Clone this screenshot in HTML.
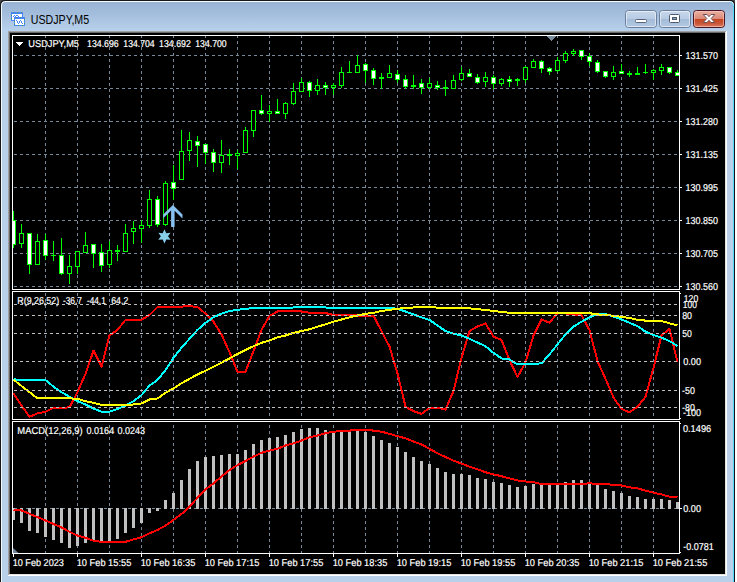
<!DOCTYPE html>
<html><head><meta charset="utf-8"><title>USDJPY,M5</title>
<style>html,body{margin:0;padding:0;background:#ffffff;overflow:hidden}body{width:737px;height:582px;position:relative;font-family:"Liberation Sans",sans-serif}</style>
</head><body>
<svg width="737" height="582" viewBox="0 0 737 582" style="display:block;position:absolute;left:0;top:0">
<defs>
<linearGradient id="gt" x1="0" y1="0" x2="0" y2="1">
<stop offset="0" stop-color="#99b3d4"/><stop offset="0.4" stop-color="#a3bddc"/><stop offset="1" stop-color="#b9d3ee"/>
</linearGradient>
<linearGradient id="gside" x1="0" y1="0" x2="0" y2="1">
<stop offset="0" stop-color="#b9d0ea"/><stop offset="1" stop-color="#bcd2ea"/>
</linearGradient>
<linearGradient id="gbtn" x1="0" y1="0" x2="0" y2="1">
<stop offset="0" stop-color="#c9d9ec"/><stop offset="0.48" stop-color="#b7cbe3"/><stop offset="0.5" stop-color="#a3bbd8"/><stop offset="1" stop-color="#b4cae3"/>
</linearGradient>
<linearGradient id="gclose" x1="0" y1="0" x2="0" y2="1">
<stop offset="0" stop-color="#eab2a4"/><stop offset="0.48" stop-color="#dc8a78"/><stop offset="0.5" stop-color="#c6431f"/><stop offset="0.8" stop-color="#cc5a3c"/><stop offset="1" stop-color="#dc8a72"/>
</linearGradient>
<clipPath id="cm"><rect x="13" y="36" width="666" height="253"/></clipPath>
<clipPath id="c1"><rect x="13" y="292" width="666" height="127"/></clipPath>
<clipPath id="c2"><rect x="13" y="422" width="666" height="131"/></clipPath>
</defs>
<rect x="0" y="0" width="737" height="582" fill="#ffffff"/>
<rect x="0" y="0" width="735" height="8" fill="#4a4a4a"/>
<path d="M0 582 V5 Q0 0 5 0 H730 Q735 0 735 5 V582 Z" fill="#14181c"/>
<path d="M1 582 V5.5 Q1 1 5.5 1 H729.5 Q734 1 734 5.5 V582 Z" fill="#f6fafd"/>
<path d="M2 582 V6 Q2 2 6 2 H729 Q733 2 733 6 V582 Z" fill="#b9d0ea"/>
<path d="M2 32 V6 Q2 2 6 2 H729 Q733 2 733 6 V32 Z" fill="url(#gt)"/>
<path d="M730.5 2 L733.5 5 V582" fill="none" stroke="#52d8ff" stroke-width="1"/>
<rect x="734" y="5" width="1" height="577" fill="#101418"/>
<rect x="8" y="31" width="719" height="545" fill="#a0a0a0"/>
<rect x="9" y="32" width="718" height="544" fill="#696969"/>
<rect x="10" y="33" width="717" height="543" fill="#000000"/>
<rect x="725" y="32" width="1" height="543" fill="#e3e3e3"/>
<rect x="726" y="31" width="1" height="545" fill="#ffffff"/>
<rect x="9" y="574" width="717" height="1" fill="#e3e3e3"/>
<rect x="8" y="575" width="719" height="1" fill="#ffffff"/>
<rect x="10" y="33" width="715" height="541" fill="#000000"/>
<g shape-rendering="crispEdges">
<rect x="11" y="12" width="12" height="9" fill="#4a86f7"/>
<rect x="12" y="14" width="10" height="6" fill="#ffffff"/>
<rect x="13" y="16" width="1" height="1" fill="#4a86f7"/>
<rect x="14" y="15" width="1" height="1" fill="#4a86f7"/>
<rect x="15" y="16" width="1" height="1" fill="#4a86f7"/>
<rect x="16" y="15" width="1" height="1" fill="#4a86f7"/>
<rect x="17" y="15" width="1" height="1" fill="#4a86f7"/>
<rect x="18" y="16" width="1" height="1" fill="#4a86f7"/>
<rect x="19" y="17" width="1" height="1" fill="#4a86f7"/>
<rect x="14" y="17" width="11" height="9" fill="#4a86f7"/>
<rect x="15" y="19" width="9" height="6" fill="#ffffff"/>
<rect x="16" y="20" width="1" height="1" fill="#4a86f7"/>
<rect x="17" y="21" width="1" height="1" fill="#4a86f7"/>
<rect x="17" y="22" width="1" height="1" fill="#4a86f7"/>
<rect x="18" y="23" width="1" height="1" fill="#4a86f7"/>
<rect x="19" y="22" width="1" height="1" fill="#4a86f7"/>
<rect x="19" y="21" width="1" height="1" fill="#4a86f7"/>
<rect x="20" y="20" width="1" height="1" fill="#4a86f7"/>
<rect x="21" y="21" width="1" height="1" fill="#4a86f7"/>
<rect x="21" y="22" width="1" height="1" fill="#4a86f7"/>
<rect x="22" y="23" width="1" height="1" fill="#4a86f7"/>
<rect x="13" y="12" width="1" height="1" fill="#3fa06a"/>
<rect x="17" y="12" width="1" height="1" fill="#3fa06a"/>
<rect x="21" y="12" width="1" height="1" fill="#3fa06a"/>
<rect x="16" y="17" width="1" height="1" fill="#3fa06a"/>
<rect x="20" y="17" width="1" height="1" fill="#3fa06a"/>
<rect x="24" y="19" width="1" height="1" fill="#3fa06a"/>
<rect x="14" y="21" width="1" height="1" fill="#3fa06a"/>
<rect x="14" y="24" width="1" height="1" fill="#3fa06a"/>
<rect x="18" y="25" width="1" height="1" fill="#3fa06a"/>
<rect x="22" y="25" width="1" height="1" fill="#3fa06a"/>
<rect x="24" y="23" width="1" height="1" fill="#3fa06a"/>
<rect x="11" y="15" width="1" height="1" fill="#3fa06a"/>
<rect x="11" y="18" width="1" height="1" fill="#3fa06a"/>
</g>
<g font-family="'Liberation Sans', sans-serif">
<text x="30.7" y="24" font-size="12" fill="#000000" stroke="#000000" stroke-width="0" textLength="58.5" lengthAdjust="spacingAndGlyphs">USDJPY,M5</text>
</g>
<rect x="625.5" y="10.5" width="31" height="17" rx="3" ry="3" fill="url(#gbtn)" stroke="#6b7f9c" stroke-width="1"/>
<rect x="626.5" y="11.5" width="29" height="15" rx="2" ry="2" fill="none" stroke="#ffffff" stroke-width="1" stroke-opacity="0.55"/>
<rect x="659.5" y="10.5" width="31" height="17" rx="3" ry="3" fill="url(#gbtn)" stroke="#6b7f9c" stroke-width="1"/>
<rect x="660.5" y="11.5" width="29" height="15" rx="2" ry="2" fill="none" stroke="#ffffff" stroke-width="1" stroke-opacity="0.55"/>
<rect x="693.5" y="10.5" width="31" height="17" rx="3" ry="3" fill="url(#gclose)" stroke="#4a1626" stroke-width="1"/>
<rect x="694.5" y="11.5" width="29" height="15" rx="2" ry="2" fill="none" stroke="#ffd0c4" stroke-width="1" stroke-opacity="0.55"/>
<rect x="635.5" y="19.5" width="11" height="3" rx="1" fill="#ffffff" stroke="#56637a" stroke-width="1"/>
<rect x="669.5" y="14.5" width="10" height="8" rx="1" fill="#ffffff" stroke="#4d5a6c" stroke-width="1"/>
<rect x="672.5" y="17.5" width="4" height="2" fill="#8aa0bc" stroke="#4d5a6c" stroke-width="1"/>
<path d="M703.2 14.5 H707 L709 16.7 L711 14.5 H714.8 L711.2 18.5 L714.8 22.5 H711 L709 20.3 L707 22.5 H703.2 L706.8 18.5 Z" fill="#ffffff" stroke="#6a5058" stroke-width="1" stroke-linejoin="round"/>
<g shape-rendering="crispEdges">
<rect x="12" y="35" width="668" height="1" fill="#ffffff"/>
<rect x="12" y="35" width="1" height="519" fill="#ffffff"/>
<rect x="679" y="35" width="1" height="519" fill="#ffffff"/>
<rect x="12" y="289" width="668" height="1" fill="#ffffff"/>
<rect x="12" y="290" width="668" height="1" fill="#000000"/>
<rect x="12" y="291" width="668" height="1" fill="#ffffff"/>
<rect x="12" y="419" width="668" height="1" fill="#ffffff"/>
<rect x="12" y="420" width="668" height="1" fill="#000000"/>
<rect x="12" y="421" width="668" height="1" fill="#ffffff"/>
<rect x="12" y="553" width="668" height="1" fill="#ffffff"/>
<line x1="14" y1="55.5" x2="679" y2="55.5" stroke="#778899" stroke-width="1" stroke-dasharray="3 3"/>
<rect x="680" y="55" width="2" height="1" fill="#ffffff"/>
<line x1="14" y1="88.5" x2="679" y2="88.5" stroke="#778899" stroke-width="1" stroke-dasharray="3 3"/>
<rect x="680" y="88" width="2" height="1" fill="#ffffff"/>
<line x1="14" y1="121.5" x2="679" y2="121.5" stroke="#778899" stroke-width="1" stroke-dasharray="3 3"/>
<rect x="680" y="121" width="2" height="1" fill="#ffffff"/>
<line x1="14" y1="154.5" x2="679" y2="154.5" stroke="#778899" stroke-width="1" stroke-dasharray="3 3"/>
<rect x="680" y="154" width="2" height="1" fill="#ffffff"/>
<line x1="14" y1="187.5" x2="679" y2="187.5" stroke="#778899" stroke-width="1" stroke-dasharray="3 3"/>
<rect x="680" y="187" width="2" height="1" fill="#ffffff"/>
<line x1="14" y1="220.5" x2="679" y2="220.5" stroke="#778899" stroke-width="1" stroke-dasharray="3 3"/>
<rect x="680" y="220" width="2" height="1" fill="#ffffff"/>
<line x1="14" y1="253.5" x2="679" y2="253.5" stroke="#778899" stroke-width="1" stroke-dasharray="3 3"/>
<rect x="680" y="253" width="2" height="1" fill="#ffffff"/>
<line x1="14" y1="286.5" x2="679" y2="286.5" stroke="#778899" stroke-width="1" stroke-dasharray="3 3"/>
<rect x="680" y="286" width="2" height="1" fill="#ffffff"/>
<line x1="45.5" y1="35" x2="45.5" y2="553" stroke="#778899" stroke-width="1" stroke-dasharray="3 3"/>
<line x1="77.5" y1="35" x2="77.5" y2="553" stroke="#778899" stroke-width="1" stroke-dasharray="3 3"/>
<line x1="109.5" y1="35" x2="109.5" y2="553" stroke="#778899" stroke-width="1" stroke-dasharray="3 3"/>
<line x1="141.5" y1="35" x2="141.5" y2="553" stroke="#778899" stroke-width="1" stroke-dasharray="3 3"/>
<line x1="173.5" y1="35" x2="173.5" y2="553" stroke="#778899" stroke-width="1" stroke-dasharray="3 3"/>
<line x1="205.5" y1="35" x2="205.5" y2="553" stroke="#778899" stroke-width="1" stroke-dasharray="3 3"/>
<line x1="237.5" y1="35" x2="237.5" y2="553" stroke="#778899" stroke-width="1" stroke-dasharray="3 3"/>
<line x1="269.5" y1="35" x2="269.5" y2="553" stroke="#778899" stroke-width="1" stroke-dasharray="3 3"/>
<line x1="301.5" y1="35" x2="301.5" y2="553" stroke="#778899" stroke-width="1" stroke-dasharray="3 3"/>
<line x1="333.5" y1="35" x2="333.5" y2="553" stroke="#778899" stroke-width="1" stroke-dasharray="3 3"/>
<line x1="365.5" y1="35" x2="365.5" y2="553" stroke="#778899" stroke-width="1" stroke-dasharray="3 3"/>
<line x1="397.5" y1="35" x2="397.5" y2="553" stroke="#778899" stroke-width="1" stroke-dasharray="3 3"/>
<line x1="429.5" y1="35" x2="429.5" y2="553" stroke="#778899" stroke-width="1" stroke-dasharray="3 3"/>
<line x1="461.5" y1="35" x2="461.5" y2="553" stroke="#778899" stroke-width="1" stroke-dasharray="3 3"/>
<line x1="493.5" y1="35" x2="493.5" y2="553" stroke="#778899" stroke-width="1" stroke-dasharray="3 3"/>
<line x1="525.5" y1="35" x2="525.5" y2="553" stroke="#778899" stroke-width="1" stroke-dasharray="3 3"/>
<line x1="557.5" y1="35" x2="557.5" y2="553" stroke="#778899" stroke-width="1" stroke-dasharray="3 3"/>
<line x1="589.5" y1="35" x2="589.5" y2="553" stroke="#778899" stroke-width="1" stroke-dasharray="3 3"/>
<line x1="621.5" y1="35" x2="621.5" y2="553" stroke="#778899" stroke-width="1" stroke-dasharray="3 3"/>
<line x1="653.5" y1="35" x2="653.5" y2="553" stroke="#778899" stroke-width="1" stroke-dasharray="3 3"/>
<rect x="12" y="35" width="668" height="1" fill="#ffffff"/>
<rect x="12" y="553" width="668" height="1" fill="#ffffff"/>
<rect x="12" y="289" width="668" height="1" fill="#ffffff"/>
<rect x="13" y="290" width="666" height="1" fill="#000000"/>
<rect x="12" y="291" width="668" height="1" fill="#ffffff"/>
<rect x="12" y="419" width="668" height="1" fill="#ffffff"/>
<rect x="13" y="420" width="666" height="1" fill="#000000"/>
<rect x="12" y="421" width="668" height="1" fill="#ffffff"/>
<line x1="14" y1="508.5" x2="679" y2="508.5" stroke="#778899" stroke-width="1" stroke-dasharray="3 3"/>
<rect x="680" y="293" width="1" height="1" fill="#ffffff"/>
<rect x="680" y="418" width="1" height="1" fill="#ffffff"/>
<rect x="680" y="423" width="1" height="1" fill="#ffffff"/>
<rect x="680" y="508" width="2" height="1" fill="#ffffff"/>
<rect x="680" y="552" width="1" height="1" fill="#ffffff"/>
<rect x="13" y="554" width="1" height="3" fill="#ffffff"/>
<rect x="77" y="554" width="1" height="3" fill="#ffffff"/>
<rect x="141" y="554" width="1" height="3" fill="#ffffff"/>
<rect x="205" y="554" width="1" height="3" fill="#ffffff"/>
<rect x="269" y="554" width="1" height="3" fill="#ffffff"/>
<rect x="333" y="554" width="1" height="3" fill="#ffffff"/>
<rect x="397" y="554" width="1" height="3" fill="#ffffff"/>
<rect x="461" y="554" width="1" height="3" fill="#ffffff"/>
<rect x="525" y="554" width="1" height="3" fill="#ffffff"/>
<rect x="589" y="554" width="1" height="3" fill="#ffffff"/>
<rect x="653" y="554" width="1" height="3" fill="#ffffff"/>
</g>
<g shape-rendering="crispEdges">
<rect x="547" y="36" width="9" height="1" fill="#7b8c9e"/>
<rect x="548" y="37" width="7" height="1" fill="#7b8c9e"/>
<rect x="549" y="38" width="5" height="1" fill="#7b8c9e"/>
<rect x="550" y="39" width="3" height="1" fill="#7b8c9e"/>
<rect x="551" y="40" width="1" height="1" fill="#7b8c9e"/>
</g>
<path d="M13 548 V553 H18.5 Z" fill="#6f86a0"/>
<g shape-rendering="crispEdges">
<rect x="16" y="42" width="7" height="1" fill="#ffffff"/>
<rect x="17" y="43" width="5" height="1" fill="#ffffff"/>
<rect x="18" y="44" width="3" height="1" fill="#ffffff"/>
<rect x="19" y="45" width="1" height="1" fill="#ffffff"/>
</g>
<g shape-rendering="crispEdges" clip-path="url(#cm)">
<rect x="13" y="211" width="1" height="37" fill="#00ff00"/>
<rect x="11" y="220" width="5" height="25" fill="#00ff00"/>
<rect x="12" y="221" width="3" height="23" fill="#ffffff"/>
<rect x="21" y="224" width="1" height="24" fill="#00ff00"/>
<rect x="19" y="233" width="5" height="11" fill="#00ff00"/>
<rect x="20" y="234" width="3" height="9" fill="#000000"/>
<rect x="29" y="233" width="1" height="41" fill="#00ff00"/>
<rect x="27" y="233" width="5" height="32" fill="#00ff00"/>
<rect x="28" y="234" width="3" height="30" fill="#ffffff"/>
<rect x="37" y="234" width="1" height="31" fill="#00ff00"/>
<rect x="35" y="241" width="5" height="24" fill="#00ff00"/>
<rect x="36" y="242" width="3" height="22" fill="#000000"/>
<rect x="45" y="234" width="1" height="26" fill="#00ff00"/>
<rect x="43" y="240" width="5" height="16" fill="#00ff00"/>
<rect x="44" y="241" width="3" height="14" fill="#ffffff"/>
<rect x="53" y="241" width="1" height="20" fill="#00ff00"/>
<rect x="51" y="255" width="5" height="1" fill="#00ff00"/>
<rect x="61" y="238" width="1" height="37" fill="#00ff00"/>
<rect x="59" y="255" width="5" height="19" fill="#00ff00"/>
<rect x="60" y="256" width="3" height="17" fill="#ffffff"/>
<rect x="69" y="255" width="1" height="29" fill="#00ff00"/>
<rect x="67" y="266" width="5" height="8" fill="#00ff00"/>
<rect x="68" y="267" width="3" height="6" fill="#000000"/>
<rect x="77" y="251" width="1" height="23" fill="#00ff00"/>
<rect x="75" y="251" width="5" height="16" fill="#00ff00"/>
<rect x="76" y="252" width="3" height="14" fill="#000000"/>
<rect x="85" y="232" width="1" height="21" fill="#00ff00"/>
<rect x="83" y="245" width="5" height="8" fill="#00ff00"/>
<rect x="84" y="246" width="3" height="6" fill="#000000"/>
<rect x="93" y="244" width="1" height="24" fill="#00ff00"/>
<rect x="91" y="244" width="5" height="10" fill="#00ff00"/>
<rect x="92" y="245" width="3" height="8" fill="#ffffff"/>
<rect x="101" y="244" width="1" height="28" fill="#00ff00"/>
<rect x="99" y="252" width="5" height="14" fill="#00ff00"/>
<rect x="100" y="253" width="3" height="12" fill="#ffffff"/>
<rect x="109" y="241" width="1" height="27" fill="#00ff00"/>
<rect x="107" y="250" width="5" height="15" fill="#00ff00"/>
<rect x="108" y="251" width="3" height="13" fill="#000000"/>
<rect x="117" y="245" width="1" height="16" fill="#00ff00"/>
<rect x="115" y="250" width="5" height="2" fill="#00ff00"/>
<rect x="125" y="224" width="1" height="28" fill="#00ff00"/>
<rect x="123" y="233" width="5" height="19" fill="#00ff00"/>
<rect x="124" y="234" width="3" height="17" fill="#000000"/>
<rect x="133" y="221" width="1" height="23" fill="#00ff00"/>
<rect x="131" y="228" width="5" height="4" fill="#00ff00"/>
<rect x="132" y="229" width="3" height="2" fill="#000000"/>
<rect x="141" y="220" width="1" height="23" fill="#00ff00"/>
<rect x="139" y="225" width="5" height="4" fill="#00ff00"/>
<rect x="140" y="226" width="3" height="2" fill="#000000"/>
<rect x="149" y="190" width="1" height="38" fill="#00ff00"/>
<rect x="147" y="199" width="5" height="27" fill="#00ff00"/>
<rect x="148" y="200" width="3" height="25" fill="#000000"/>
<rect x="157" y="196" width="1" height="31" fill="#00ff00"/>
<rect x="155" y="199" width="5" height="26" fill="#00ff00"/>
<rect x="156" y="200" width="3" height="24" fill="#ffffff"/>
<rect x="165" y="181" width="1" height="45" fill="#00ff00"/>
<rect x="163" y="183" width="5" height="42" fill="#00ff00"/>
<rect x="164" y="184" width="3" height="40" fill="#000000"/>
<rect x="173" y="165" width="1" height="35" fill="#00ff00"/>
<rect x="171" y="182" width="5" height="7" fill="#00ff00"/>
<rect x="172" y="183" width="3" height="5" fill="#ffffff"/>
<rect x="181" y="130" width="1" height="50" fill="#00ff00"/>
<rect x="179" y="151" width="5" height="29" fill="#00ff00"/>
<rect x="180" y="152" width="3" height="27" fill="#000000"/>
<rect x="189" y="132" width="1" height="29" fill="#00ff00"/>
<rect x="187" y="140" width="5" height="11" fill="#00ff00"/>
<rect x="188" y="141" width="3" height="9" fill="#000000"/>
<rect x="197" y="136" width="1" height="31" fill="#00ff00"/>
<rect x="195" y="141" width="5" height="5" fill="#00ff00"/>
<rect x="196" y="142" width="3" height="3" fill="#ffffff"/>
<rect x="205" y="144" width="1" height="20" fill="#00ff00"/>
<rect x="203" y="144" width="5" height="9" fill="#00ff00"/>
<rect x="204" y="145" width="3" height="7" fill="#ffffff"/>
<rect x="213" y="149" width="1" height="23" fill="#00ff00"/>
<rect x="211" y="152" width="5" height="11" fill="#00ff00"/>
<rect x="212" y="153" width="3" height="9" fill="#ffffff"/>
<rect x="221" y="140" width="1" height="33" fill="#00ff00"/>
<rect x="219" y="155" width="5" height="8" fill="#00ff00"/>
<rect x="220" y="156" width="3" height="6" fill="#000000"/>
<rect x="229" y="149" width="1" height="16" fill="#00ff00"/>
<rect x="227" y="154" width="5" height="2" fill="#00ff00"/>
<rect x="237" y="150" width="1" height="19" fill="#00ff00"/>
<rect x="235" y="153" width="5" height="3" fill="#00ff00"/>
<rect x="236" y="154" width="3" height="1" fill="#000000"/>
<rect x="245" y="127" width="1" height="26" fill="#00ff00"/>
<rect x="243" y="130" width="5" height="23" fill="#00ff00"/>
<rect x="244" y="131" width="3" height="21" fill="#000000"/>
<rect x="253" y="110" width="1" height="27" fill="#00ff00"/>
<rect x="251" y="110" width="5" height="21" fill="#00ff00"/>
<rect x="252" y="111" width="3" height="19" fill="#000000"/>
<rect x="261" y="95" width="1" height="20" fill="#00ff00"/>
<rect x="259" y="110" width="5" height="4" fill="#00ff00"/>
<rect x="260" y="111" width="3" height="2" fill="#ffffff"/>
<rect x="269" y="105" width="1" height="17" fill="#00ff00"/>
<rect x="267" y="111" width="5" height="3" fill="#00ff00"/>
<rect x="268" y="112" width="3" height="1" fill="#000000"/>
<rect x="277" y="99" width="1" height="15" fill="#00ff00"/>
<rect x="275" y="111" width="5" height="3" fill="#00ff00"/>
<rect x="276" y="112" width="3" height="1" fill="#ffffff"/>
<rect x="285" y="102" width="1" height="17" fill="#00ff00"/>
<rect x="283" y="103" width="5" height="11" fill="#00ff00"/>
<rect x="284" y="104" width="3" height="9" fill="#000000"/>
<rect x="293" y="83" width="1" height="22" fill="#00ff00"/>
<rect x="291" y="91" width="5" height="13" fill="#00ff00"/>
<rect x="292" y="92" width="3" height="11" fill="#000000"/>
<rect x="301" y="78" width="1" height="14" fill="#00ff00"/>
<rect x="299" y="82" width="5" height="10" fill="#00ff00"/>
<rect x="300" y="83" width="3" height="8" fill="#000000"/>
<rect x="309" y="81" width="1" height="16" fill="#00ff00"/>
<rect x="307" y="82" width="5" height="9" fill="#00ff00"/>
<rect x="308" y="83" width="3" height="7" fill="#ffffff"/>
<rect x="317" y="79" width="1" height="16" fill="#00ff00"/>
<rect x="315" y="85" width="5" height="6" fill="#00ff00"/>
<rect x="316" y="86" width="3" height="4" fill="#000000"/>
<rect x="325" y="82" width="1" height="13" fill="#00ff00"/>
<rect x="323" y="85" width="5" height="3" fill="#00ff00"/>
<rect x="324" y="86" width="3" height="1" fill="#ffffff"/>
<rect x="333" y="83" width="1" height="12" fill="#00ff00"/>
<rect x="331" y="85" width="5" height="3" fill="#00ff00"/>
<rect x="332" y="86" width="3" height="1" fill="#000000"/>
<rect x="341" y="67" width="1" height="21" fill="#00ff00"/>
<rect x="339" y="72" width="5" height="14" fill="#00ff00"/>
<rect x="340" y="73" width="3" height="12" fill="#000000"/>
<rect x="349" y="61" width="1" height="12" fill="#00ff00"/>
<rect x="347" y="72" width="5" height="1" fill="#00ff00"/>
<rect x="357" y="55" width="1" height="18" fill="#00ff00"/>
<rect x="355" y="65" width="5" height="8" fill="#00ff00"/>
<rect x="356" y="66" width="3" height="6" fill="#000000"/>
<rect x="365" y="63" width="1" height="20" fill="#00ff00"/>
<rect x="363" y="64" width="5" height="7" fill="#00ff00"/>
<rect x="364" y="65" width="3" height="5" fill="#ffffff"/>
<rect x="373" y="68" width="1" height="17" fill="#00ff00"/>
<rect x="371" y="70" width="5" height="9" fill="#00ff00"/>
<rect x="372" y="71" width="3" height="7" fill="#ffffff"/>
<rect x="381" y="73" width="1" height="16" fill="#00ff00"/>
<rect x="379" y="77" width="5" height="2" fill="#00ff00"/>
<rect x="389" y="65" width="1" height="13" fill="#00ff00"/>
<rect x="387" y="73" width="5" height="5" fill="#00ff00"/>
<rect x="388" y="74" width="3" height="3" fill="#000000"/>
<rect x="397" y="70" width="1" height="13" fill="#00ff00"/>
<rect x="395" y="74" width="5" height="6" fill="#00ff00"/>
<rect x="396" y="75" width="3" height="4" fill="#ffffff"/>
<rect x="405" y="75" width="1" height="14" fill="#00ff00"/>
<rect x="403" y="79" width="5" height="8" fill="#00ff00"/>
<rect x="404" y="80" width="3" height="6" fill="#ffffff"/>
<rect x="413" y="75" width="1" height="14" fill="#00ff00"/>
<rect x="411" y="85" width="5" height="2" fill="#00ff00"/>
<rect x="421" y="79" width="1" height="15" fill="#00ff00"/>
<rect x="419" y="83" width="5" height="5" fill="#00ff00"/>
<rect x="420" y="84" width="3" height="3" fill="#ffffff"/>
<rect x="429" y="78" width="1" height="11" fill="#00ff00"/>
<rect x="427" y="83" width="5" height="5" fill="#00ff00"/>
<rect x="428" y="84" width="3" height="3" fill="#000000"/>
<rect x="437" y="81" width="1" height="9" fill="#00ff00"/>
<rect x="435" y="85" width="5" height="3" fill="#00ff00"/>
<rect x="436" y="86" width="3" height="1" fill="#ffffff"/>
<rect x="445" y="80" width="1" height="16" fill="#00ff00"/>
<rect x="443" y="87" width="5" height="2" fill="#00ff00"/>
<rect x="453" y="75" width="1" height="14" fill="#00ff00"/>
<rect x="451" y="80" width="5" height="9" fill="#00ff00"/>
<rect x="452" y="81" width="3" height="7" fill="#000000"/>
<rect x="461" y="67" width="1" height="14" fill="#00ff00"/>
<rect x="459" y="73" width="5" height="7" fill="#00ff00"/>
<rect x="460" y="74" width="3" height="5" fill="#000000"/>
<rect x="469" y="69" width="1" height="8" fill="#00ff00"/>
<rect x="467" y="73" width="5" height="4" fill="#00ff00"/>
<rect x="468" y="74" width="3" height="2" fill="#ffffff"/>
<rect x="477" y="74" width="1" height="10" fill="#00ff00"/>
<rect x="475" y="77" width="5" height="6" fill="#00ff00"/>
<rect x="476" y="78" width="3" height="4" fill="#ffffff"/>
<rect x="485" y="72" width="1" height="15" fill="#00ff00"/>
<rect x="483" y="77" width="5" height="5" fill="#00ff00"/>
<rect x="484" y="78" width="3" height="3" fill="#000000"/>
<rect x="493" y="75" width="1" height="14" fill="#00ff00"/>
<rect x="491" y="77" width="5" height="7" fill="#00ff00"/>
<rect x="492" y="78" width="3" height="5" fill="#ffffff"/>
<rect x="501" y="78" width="1" height="8" fill="#00ff00"/>
<rect x="499" y="79" width="5" height="5" fill="#00ff00"/>
<rect x="500" y="80" width="3" height="3" fill="#000000"/>
<rect x="509" y="76" width="1" height="11" fill="#00ff00"/>
<rect x="507" y="79" width="5" height="3" fill="#00ff00"/>
<rect x="508" y="80" width="3" height="1" fill="#ffffff"/>
<rect x="517" y="78" width="1" height="8" fill="#00ff00"/>
<rect x="515" y="79" width="5" height="2" fill="#00ff00"/>
<rect x="525" y="66" width="1" height="17" fill="#00ff00"/>
<rect x="523" y="67" width="5" height="13" fill="#00ff00"/>
<rect x="524" y="68" width="3" height="11" fill="#000000"/>
<rect x="533" y="59" width="1" height="9" fill="#00ff00"/>
<rect x="531" y="61" width="5" height="7" fill="#00ff00"/>
<rect x="532" y="62" width="3" height="5" fill="#000000"/>
<rect x="541" y="60" width="1" height="13" fill="#00ff00"/>
<rect x="539" y="61" width="5" height="8" fill="#00ff00"/>
<rect x="540" y="62" width="3" height="6" fill="#ffffff"/>
<rect x="549" y="67" width="1" height="8" fill="#00ff00"/>
<rect x="547" y="68" width="5" height="4" fill="#00ff00"/>
<rect x="548" y="69" width="3" height="2" fill="#ffffff"/>
<rect x="557" y="57" width="1" height="15" fill="#00ff00"/>
<rect x="555" y="60" width="5" height="11" fill="#00ff00"/>
<rect x="556" y="61" width="3" height="9" fill="#000000"/>
<rect x="565" y="51" width="1" height="12" fill="#00ff00"/>
<rect x="563" y="53" width="5" height="8" fill="#00ff00"/>
<rect x="564" y="54" width="3" height="6" fill="#000000"/>
<rect x="573" y="49" width="1" height="7" fill="#00ff00"/>
<rect x="571" y="51" width="5" height="3" fill="#00ff00"/>
<rect x="572" y="52" width="3" height="1" fill="#000000"/>
<rect x="581" y="50" width="1" height="10" fill="#00ff00"/>
<rect x="579" y="50" width="5" height="7" fill="#00ff00"/>
<rect x="580" y="51" width="3" height="5" fill="#ffffff"/>
<rect x="589" y="53" width="1" height="13" fill="#00ff00"/>
<rect x="587" y="56" width="5" height="6" fill="#00ff00"/>
<rect x="588" y="57" width="3" height="4" fill="#ffffff"/>
<rect x="597" y="60" width="1" height="13" fill="#00ff00"/>
<rect x="595" y="62" width="5" height="10" fill="#00ff00"/>
<rect x="596" y="63" width="3" height="8" fill="#ffffff"/>
<rect x="605" y="71" width="1" height="7" fill="#00ff00"/>
<rect x="603" y="71" width="5" height="6" fill="#00ff00"/>
<rect x="604" y="72" width="3" height="4" fill="#ffffff"/>
<rect x="613" y="66" width="1" height="14" fill="#00ff00"/>
<rect x="611" y="72" width="5" height="5" fill="#00ff00"/>
<rect x="612" y="73" width="3" height="3" fill="#000000"/>
<rect x="621" y="64" width="1" height="10" fill="#00ff00"/>
<rect x="619" y="71" width="5" height="3" fill="#00ff00"/>
<rect x="620" y="72" width="3" height="1" fill="#ffffff"/>
<rect x="629" y="71" width="1" height="6" fill="#00ff00"/>
<rect x="627" y="73" width="5" height="2" fill="#00ff00"/>
<rect x="637" y="67" width="1" height="8" fill="#00ff00"/>
<rect x="635" y="73" width="5" height="2" fill="#00ff00"/>
<rect x="645" y="64" width="1" height="10" fill="#00ff00"/>
<rect x="643" y="72" width="5" height="1" fill="#00ff00"/>
<rect x="653" y="69" width="1" height="11" fill="#00ff00"/>
<rect x="651" y="70" width="5" height="3" fill="#00ff00"/>
<rect x="652" y="71" width="3" height="1" fill="#000000"/>
<rect x="661" y="64" width="1" height="11" fill="#00ff00"/>
<rect x="659" y="67" width="5" height="4" fill="#00ff00"/>
<rect x="660" y="68" width="3" height="2" fill="#000000"/>
<rect x="669" y="67" width="1" height="7" fill="#00ff00"/>
<rect x="667" y="67" width="5" height="6" fill="#00ff00"/>
<rect x="668" y="68" width="3" height="4" fill="#ffffff"/>
<rect x="677" y="70" width="1" height="6" fill="#00ff00"/>
<rect x="675" y="72" width="5" height="4" fill="#00ff00"/>
<rect x="676" y="73" width="3" height="2" fill="#ffffff"/>
</g>
<polygon points="172.9,204.9 182.5,214.4 182.5,218.6 174.6,210.8 174.6,227 171.1,227 171.1,210.5 163.2,218.3 163.2,214.6" fill="#88c0f0"/>
<polygon points="164.45,229.20 166.25,233.18 170.60,232.75 168.05,236.30 170.60,239.85 166.25,239.42 164.45,243.40 162.65,239.42 158.30,239.85 160.85,236.30 158.30,232.75 162.65,233.18" fill="#87ceeb"/>
<polyline points="13.5,393.4 21.5,405.6 29.5,416.7 37.5,413.4 45.5,411.8 53.5,407.8 61.5,407.8 69.5,407.4 77.5,392.2 85.5,373.8 93.5,350.6 101.5,366.7 109.5,335.5 117.5,329.9 125.5,319.9 133.5,319.9 141.5,319.9 149.5,315.0 157.5,307.0 165.5,307.0 173.5,307.0 181.5,306.6 189.5,306.1 197.5,307.0 205.5,313.7 213.5,321.8 221.5,334.4 229.5,352.2 237.5,371.8 245.5,371.8 253.5,351.1 261.5,329.9 269.5,315.9 277.5,311.5 285.5,311.0 293.5,311.0 301.5,311.5 309.5,312.8 317.5,313.3 325.5,313.0 333.5,315.0 341.5,315.0 349.5,315.0 357.5,315.5 365.5,315.5 373.5,315.5 381.5,331.1 389.5,346.6 397.5,373.3 405.5,406.7 413.5,411.2 421.5,413.8 429.5,407.8 437.5,407.8 445.5,409.6 453.5,391.1 461.5,357.8 469.5,331.1 477.5,326.4 485.5,323.5 493.5,336.6 501.5,340.0 509.5,360.0 517.5,377.1 525.5,362.2 533.5,335.5 541.5,319.5 549.5,322.6 557.5,313.3 565.5,313.3 573.5,314.8 581.5,314.9 589.5,330.2 597.5,361.1 605.5,378.9 613.5,397.6 621.5,408.9 629.5,412.3 637.5,406.7 645.5,396.7 653.5,367.8 661.5,335.5 669.5,328.8 677.5,362.2" fill="none" stroke="#ff0000" stroke-width="2" stroke-linejoin="round" shape-rendering="crispEdges" clip-path="url(#c1)"/>
<polyline points="13.5,379.3 21.5,380.0 29.5,380.0 37.5,380.0 45.5,380.0 53.5,386.7 61.5,392.2 69.5,396.7 77.5,401.1 85.5,404.5 93.5,408.5 101.5,411.8 109.5,411.8 117.5,408.9 125.5,405.6 133.5,401.1 141.5,395.1 149.5,385.6 157.5,380.0 165.5,370.0 173.5,357.8 181.5,347.7 189.5,338.8 197.5,329.9 205.5,322.8 213.5,317.3 221.5,313.7 229.5,311.0 237.5,309.9 245.5,308.8 253.5,308.1 261.5,307.9 269.5,307.9 277.5,307.9 285.5,307.9 293.5,307.5 301.5,307.2 309.5,307.0 317.5,307.0 325.5,307.5 333.5,307.9 341.5,307.9 349.5,307.9 357.5,307.9 365.5,307.9 373.5,307.9 381.5,307.9 389.5,307.9 397.5,308.8 405.5,311.5 413.5,314.4 421.5,317.3 429.5,319.9 437.5,325.5 445.5,331.1 453.5,333.7 461.5,335.5 469.5,338.8 477.5,342.6 485.5,346.2 493.5,352.9 501.5,358.4 509.5,359.5 517.5,364.4 525.5,364.0 533.5,364.0 541.5,363.3 549.5,354.4 557.5,344.4 565.5,334.4 573.5,326.6 581.5,321.7 589.5,317.3 597.5,314.0 605.5,314.0 613.5,316.6 621.5,319.5 629.5,322.8 637.5,326.2 645.5,331.7 653.5,335.1 661.5,337.7 669.5,341.1 677.5,346.0" fill="none" stroke="#00ffff" stroke-width="2" stroke-linejoin="round" shape-rendering="crispEdges" clip-path="url(#c1)"/>
<polyline points="13.5,379.6 21.5,386.0 29.5,392.2 37.5,398.3 45.5,398.3 53.5,398.3 61.5,398.3 69.5,398.3 77.5,398.9 85.5,401.1 93.5,402.9 101.5,404.9 109.5,405.4 117.5,405.4 125.5,405.4 133.5,404.5 141.5,403.4 149.5,399.4 157.5,398.5 165.5,392.8 173.5,388.4 181.5,383.3 189.5,378.9 197.5,374.4 205.5,370.7 213.5,366.7 221.5,362.7 229.5,358.4 237.5,354.0 245.5,350.0 253.5,346.2 261.5,342.8 269.5,340.4 277.5,337.3 285.5,335.5 293.5,332.8 301.5,331.1 309.5,329.3 317.5,326.6 325.5,324.4 333.5,321.7 341.5,319.5 349.5,317.3 357.5,315.5 365.5,313.9 373.5,312.8 381.5,311.0 389.5,309.9 397.5,308.8 405.5,307.9 413.5,307.5 421.5,306.8 429.5,306.8 437.5,307.7 445.5,307.7 453.5,307.7 461.5,307.7 469.5,308.4 477.5,309.2 485.5,310.0 493.5,311.0 501.5,311.9 509.5,312.8 517.5,313.3 525.5,313.3 533.5,313.3 541.5,313.3 549.5,313.3 557.5,313.3 565.5,313.3 573.5,313.3 581.5,313.3 589.5,313.2 597.5,314.4 605.5,315.0 613.5,315.7 621.5,316.9 629.5,318.0 637.5,319.9 645.5,320.6 653.5,320.6 661.5,321.0 669.5,323.3 677.5,325.5" fill="none" stroke="#ffff00" stroke-width="2" stroke-linejoin="round" shape-rendering="crispEdges" clip-path="url(#c1)"/>
<g shape-rendering="crispEdges">
<line x1="14" y1="304.5" x2="679" y2="304.5" stroke="#c0c0c0" stroke-width="1" stroke-dasharray="3 3"/>
<line x1="14" y1="315.5" x2="679" y2="315.5" stroke="#c0c0c0" stroke-width="1" stroke-dasharray="3 3"/>
<line x1="14" y1="333.5" x2="679" y2="333.5" stroke="#c0c0c0" stroke-width="1" stroke-dasharray="3 3"/>
<line x1="14" y1="361.5" x2="679" y2="361.5" stroke="#c0c0c0" stroke-width="1" stroke-dasharray="3 3"/>
<line x1="14" y1="390.5" x2="679" y2="390.5" stroke="#c0c0c0" stroke-width="1" stroke-dasharray="3 3"/>
<line x1="14" y1="407.5" x2="679" y2="407.5" stroke="#c0c0c0" stroke-width="1" stroke-dasharray="3 3"/>
</g>
<g shape-rendering="crispEdges" clip-path="url(#c2)">
<rect x="12" y="508" width="3" height="12" fill="#c0c0c0"/>
<rect x="20" y="508" width="3" height="15" fill="#c0c0c0"/>
<rect x="28" y="508" width="3" height="23" fill="#c0c0c0"/>
<rect x="36" y="508" width="3" height="25" fill="#c0c0c0"/>
<rect x="44" y="508" width="3" height="29" fill="#c0c0c0"/>
<rect x="52" y="508" width="3" height="32" fill="#c0c0c0"/>
<rect x="60" y="508" width="3" height="35" fill="#c0c0c0"/>
<rect x="68" y="508" width="3" height="40" fill="#c0c0c0"/>
<rect x="76" y="508" width="3" height="38" fill="#c0c0c0"/>
<rect x="84" y="508" width="3" height="35" fill="#c0c0c0"/>
<rect x="92" y="508" width="3" height="32" fill="#c0c0c0"/>
<rect x="100" y="508" width="3" height="34" fill="#c0c0c0"/>
<rect x="108" y="508" width="3" height="33" fill="#c0c0c0"/>
<rect x="116" y="508" width="3" height="31" fill="#c0c0c0"/>
<rect x="124" y="508" width="3" height="25" fill="#c0c0c0"/>
<rect x="132" y="508" width="3" height="20" fill="#c0c0c0"/>
<rect x="140" y="508" width="3" height="15" fill="#c0c0c0"/>
<rect x="148" y="508" width="3" height="5" fill="#c0c0c0"/>
<rect x="156" y="508" width="3" height="3" fill="#c0c0c0"/>
<rect x="164" y="500" width="3" height="9" fill="#c0c0c0"/>
<rect x="172" y="493" width="3" height="16" fill="#c0c0c0"/>
<rect x="180" y="480" width="3" height="29" fill="#c0c0c0"/>
<rect x="188" y="469" width="3" height="40" fill="#c0c0c0"/>
<rect x="196" y="461" width="3" height="48" fill="#c0c0c0"/>
<rect x="204" y="457" width="3" height="52" fill="#c0c0c0"/>
<rect x="212" y="456" width="3" height="53" fill="#c0c0c0"/>
<rect x="220" y="455" width="3" height="54" fill="#c0c0c0"/>
<rect x="228" y="454" width="3" height="55" fill="#c0c0c0"/>
<rect x="236" y="454" width="3" height="55" fill="#c0c0c0"/>
<rect x="244" y="450" width="3" height="59" fill="#c0c0c0"/>
<rect x="252" y="444" width="3" height="65" fill="#c0c0c0"/>
<rect x="260" y="440" width="3" height="69" fill="#c0c0c0"/>
<rect x="268" y="438" width="3" height="71" fill="#c0c0c0"/>
<rect x="276" y="437" width="3" height="72" fill="#c0c0c0"/>
<rect x="284" y="435" width="3" height="74" fill="#c0c0c0"/>
<rect x="292" y="432" width="3" height="77" fill="#c0c0c0"/>
<rect x="300" y="429" width="3" height="80" fill="#c0c0c0"/>
<rect x="308" y="428" width="3" height="81" fill="#c0c0c0"/>
<rect x="316" y="428" width="3" height="81" fill="#c0c0c0"/>
<rect x="324" y="430" width="3" height="79" fill="#c0c0c0"/>
<rect x="332" y="432" width="3" height="77" fill="#c0c0c0"/>
<rect x="340" y="430" width="3" height="79" fill="#c0c0c0"/>
<rect x="348" y="430" width="3" height="79" fill="#c0c0c0"/>
<rect x="356" y="430" width="3" height="79" fill="#c0c0c0"/>
<rect x="364" y="432" width="3" height="77" fill="#c0c0c0"/>
<rect x="372" y="436" width="3" height="73" fill="#c0c0c0"/>
<rect x="380" y="440" width="3" height="69" fill="#c0c0c0"/>
<rect x="388" y="443" width="3" height="66" fill="#c0c0c0"/>
<rect x="396" y="447" width="3" height="62" fill="#c0c0c0"/>
<rect x="404" y="452" width="3" height="57" fill="#c0c0c0"/>
<rect x="412" y="457" width="3" height="52" fill="#c0c0c0"/>
<rect x="420" y="461" width="3" height="48" fill="#c0c0c0"/>
<rect x="428" y="464" width="3" height="45" fill="#c0c0c0"/>
<rect x="436" y="468" width="3" height="41" fill="#c0c0c0"/>
<rect x="444" y="472" width="3" height="37" fill="#c0c0c0"/>
<rect x="452" y="474" width="3" height="35" fill="#c0c0c0"/>
<rect x="460" y="474" width="3" height="35" fill="#c0c0c0"/>
<rect x="468" y="475" width="3" height="34" fill="#c0c0c0"/>
<rect x="476" y="478" width="3" height="31" fill="#c0c0c0"/>
<rect x="484" y="479" width="3" height="30" fill="#c0c0c0"/>
<rect x="492" y="482" width="3" height="27" fill="#c0c0c0"/>
<rect x="500" y="483" width="3" height="26" fill="#c0c0c0"/>
<rect x="508" y="485" width="3" height="24" fill="#c0c0c0"/>
<rect x="516" y="487" width="3" height="22" fill="#c0c0c0"/>
<rect x="524" y="486" width="3" height="23" fill="#c0c0c0"/>
<rect x="532" y="484" width="3" height="25" fill="#c0c0c0"/>
<rect x="540" y="484" width="3" height="25" fill="#c0c0c0"/>
<rect x="548" y="484" width="3" height="25" fill="#c0c0c0"/>
<rect x="556" y="484" width="3" height="25" fill="#c0c0c0"/>
<rect x="564" y="482" width="3" height="27" fill="#c0c0c0"/>
<rect x="572" y="480" width="3" height="29" fill="#c0c0c0"/>
<rect x="580" y="480" width="3" height="29" fill="#c0c0c0"/>
<rect x="588" y="482" width="3" height="27" fill="#c0c0c0"/>
<rect x="596" y="485" width="3" height="24" fill="#c0c0c0"/>
<rect x="604" y="489" width="3" height="20" fill="#c0c0c0"/>
<rect x="612" y="491" width="3" height="18" fill="#c0c0c0"/>
<rect x="620" y="493" width="3" height="16" fill="#c0c0c0"/>
<rect x="628" y="496" width="3" height="13" fill="#c0c0c0"/>
<rect x="636" y="497" width="3" height="12" fill="#c0c0c0"/>
<rect x="644" y="499" width="3" height="10" fill="#c0c0c0"/>
<rect x="652" y="499" width="3" height="10" fill="#c0c0c0"/>
<rect x="660" y="499" width="3" height="10" fill="#c0c0c0"/>
<rect x="668" y="500" width="3" height="9" fill="#c0c0c0"/>
<rect x="676" y="502" width="3" height="7" fill="#c0c0c0"/>
</g>
<polyline points="13.5,510.0 21.5,510.5 29.5,513.8 37.5,517.1 45.5,520.5 53.5,524.0 61.5,527.4 69.5,531.8 77.5,535.6 85.5,537.8 93.5,540.7 101.5,541.8 109.5,541.8 117.5,541.8 125.5,541.8 133.5,539.4 141.5,537.2 149.5,533.4 157.5,530.0 165.5,525.6 173.5,520.0 181.5,514.0 189.5,506.7 197.5,497.8 205.5,489.5 213.5,483.3 221.5,476.6 229.5,470.0 237.5,465.1 245.5,461.0 253.5,456.6 261.5,452.8 269.5,450.6 277.5,448.8 285.5,445.5 293.5,443.3 301.5,440.6 309.5,437.2 317.5,435.5 325.5,433.2 333.5,431.7 341.5,431.0 349.5,430.6 357.5,429.9 365.5,429.9 373.5,430.6 381.5,431.7 389.5,433.9 397.5,436.1 405.5,438.4 413.5,441.5 421.5,444.4 429.5,448.8 437.5,453.3 445.5,457.0 453.5,460.6 461.5,463.7 469.5,466.6 477.5,469.3 485.5,472.2 493.5,474.4 501.5,476.2 509.5,478.4 517.5,480.4 525.5,481.5 533.5,482.2 541.5,484.0 549.5,484.0 557.5,484.0 565.5,484.0 573.5,484.0 581.5,484.0 589.5,483.3 597.5,484.0 605.5,484.0 613.5,484.9 621.5,485.5 629.5,487.3 637.5,488.4 645.5,490.6 653.5,492.7 661.5,494.4 669.5,496.7 677.5,497.1" fill="none" stroke="#ff0000" stroke-width="2" stroke-linejoin="round" shape-rendering="crispEdges" clip-path="url(#c2)"/>
<g font-family="'Liberation Sans', sans-serif" text-rendering="geometricPrecision">
<text x="28.3" y="47" font-size="10.0" fill="#ffffff" stroke="#ffffff" stroke-width="0.2" textLength="50.7" lengthAdjust="spacingAndGlyphs">USDJPY,M5</text>
<text x="87.0" y="47" font-size="10.0" fill="#ffffff" stroke="#ffffff" stroke-width="0.2" textLength="31.7" lengthAdjust="spacingAndGlyphs">134.696</text>
<text x="123.3" y="47" font-size="10.0" fill="#ffffff" stroke="#ffffff" stroke-width="0.2" textLength="31.4" lengthAdjust="spacingAndGlyphs">134.704</text>
<text x="159.1" y="47" font-size="10.0" fill="#ffffff" stroke="#ffffff" stroke-width="0.2" textLength="31.7" lengthAdjust="spacingAndGlyphs">134.692</text>
<text x="195.2" y="47" font-size="10.0" fill="#ffffff" stroke="#ffffff" stroke-width="0.2" textLength="31.5" lengthAdjust="spacingAndGlyphs">134.700</text>
<text x="685.5" y="59" font-size="10.0" fill="#ffffff" stroke="#ffffff" stroke-width="0.2" textLength="32.4" lengthAdjust="spacingAndGlyphs">131.570</text>
<text x="685.5" y="92" font-size="10.0" fill="#ffffff" stroke="#ffffff" stroke-width="0.2" textLength="32.4" lengthAdjust="spacingAndGlyphs">131.425</text>
<text x="685.5" y="125" font-size="10.0" fill="#ffffff" stroke="#ffffff" stroke-width="0.2" textLength="32.4" lengthAdjust="spacingAndGlyphs">131.280</text>
<text x="685.5" y="158" font-size="10.0" fill="#ffffff" stroke="#ffffff" stroke-width="0.2" textLength="32.4" lengthAdjust="spacingAndGlyphs">131.135</text>
<text x="685.5" y="191" font-size="10.0" fill="#ffffff" stroke="#ffffff" stroke-width="0.2" textLength="32.4" lengthAdjust="spacingAndGlyphs">130.995</text>
<text x="685.5" y="224" font-size="10.0" fill="#ffffff" stroke="#ffffff" stroke-width="0.2" textLength="32.4" lengthAdjust="spacingAndGlyphs">130.850</text>
<text x="685.5" y="257" font-size="10.0" fill="#ffffff" stroke="#ffffff" stroke-width="0.2" textLength="32.4" lengthAdjust="spacingAndGlyphs">130.705</text>
<text x="685.5" y="290" font-size="10.0" fill="#ffffff" stroke="#ffffff" stroke-width="0.2" textLength="32.4" lengthAdjust="spacingAndGlyphs">130.560</text>
<text x="17.3" y="304" font-size="10.0" fill="#ffffff" stroke="#ffffff" stroke-width="0.2" textLength="41.8" lengthAdjust="spacingAndGlyphs">R(9,26,52)</text>
<text x="62.9" y="304" font-size="10.0" fill="#ffffff" stroke="#ffffff" stroke-width="0.2" textLength="19.0" lengthAdjust="spacingAndGlyphs">-36.7</text>
<text x="87.0" y="304" font-size="10.0" fill="#ffffff" stroke="#ffffff" stroke-width="0.2" textLength="18.7" lengthAdjust="spacingAndGlyphs">-44.1</text>
<text x="111.2" y="304" font-size="10.0" fill="#ffffff" stroke="#ffffff" stroke-width="0.2" textLength="17.1" lengthAdjust="spacingAndGlyphs">64.2</text>
<text x="683.8" y="302" font-size="10.0" fill="#ffffff" stroke="#ffffff" stroke-width="0.2" textLength="14.4" lengthAdjust="spacingAndGlyphs">120</text>
<text x="682.8" y="308" font-size="10.0" fill="#ffffff" stroke="#ffffff" stroke-width="0.2" textLength="14.1" lengthAdjust="spacingAndGlyphs">100</text>
<text x="682.2" y="319" font-size="10.0" fill="#ffffff" stroke="#ffffff" stroke-width="0.2" textLength="9.8" lengthAdjust="spacingAndGlyphs">80</text>
<text x="682.2" y="337" font-size="10.0" fill="#ffffff" stroke="#ffffff" stroke-width="0.2" textLength="9.6" lengthAdjust="spacingAndGlyphs">50</text>
<text x="683.2" y="365" font-size="10.0" fill="#ffffff" stroke="#ffffff" stroke-width="0.2" textLength="17.8" lengthAdjust="spacingAndGlyphs">0.00</text>
<text x="682.1" y="394" font-size="10.0" fill="#ffffff" stroke="#ffffff" stroke-width="0.2" textLength="12.8" lengthAdjust="spacingAndGlyphs">-50</text>
<text x="682.1" y="411" font-size="10.0" fill="#ffffff" stroke="#ffffff" stroke-width="0.2" textLength="12.8" lengthAdjust="spacingAndGlyphs">-80</text>
<text x="682.9" y="416" font-size="10.0" fill="#ffffff" stroke="#ffffff" stroke-width="0.2" textLength="18.1" lengthAdjust="spacingAndGlyphs">-100</text>
<text x="17.3" y="434" font-size="10.0" fill="#ffffff" stroke="#ffffff" stroke-width="0.2" textLength="65.4" lengthAdjust="spacingAndGlyphs">MACD(12,26,9)</text>
<text x="86.5" y="434" font-size="10.0" fill="#ffffff" stroke="#ffffff" stroke-width="0.2" textLength="27.7" lengthAdjust="spacingAndGlyphs">0.0164</text>
<text x="117.4" y="434" font-size="10.0" fill="#ffffff" stroke="#ffffff" stroke-width="0.2" textLength="27.6" lengthAdjust="spacingAndGlyphs">0.0243</text>
<text x="682.9" y="432" font-size="10.0" fill="#ffffff" stroke="#ffffff" stroke-width="0.2" textLength="28.3" lengthAdjust="spacingAndGlyphs">0.1496</text>
<text x="683.2" y="512" font-size="10.0" fill="#ffffff" stroke="#ffffff" stroke-width="0.2" textLength="17.8" lengthAdjust="spacingAndGlyphs">0.00</text>
<text x="683.2" y="550" font-size="10.0" fill="#ffffff" stroke="#ffffff" stroke-width="0.2" textLength="30.5" lengthAdjust="spacingAndGlyphs">-0.0781</text>
<text x="12.7" y="566" font-size="10.0" fill="#ffffff" stroke="#ffffff" stroke-width="0.2" textLength="51.2" lengthAdjust="spacingAndGlyphs">10 Feb 2023</text>
<text x="76.7" y="566" font-size="10.0" fill="#ffffff" stroke="#ffffff" stroke-width="0.2" textLength="54.6" lengthAdjust="spacingAndGlyphs">10 Feb 15:55</text>
<text x="140.7" y="566" font-size="10.0" fill="#ffffff" stroke="#ffffff" stroke-width="0.2" textLength="54.6" lengthAdjust="spacingAndGlyphs">10 Feb 16:35</text>
<text x="204.7" y="566" font-size="10.0" fill="#ffffff" stroke="#ffffff" stroke-width="0.2" textLength="54.6" lengthAdjust="spacingAndGlyphs">10 Feb 17:15</text>
<text x="268.7" y="566" font-size="10.0" fill="#ffffff" stroke="#ffffff" stroke-width="0.2" textLength="54.6" lengthAdjust="spacingAndGlyphs">10 Feb 17:55</text>
<text x="332.7" y="566" font-size="10.0" fill="#ffffff" stroke="#ffffff" stroke-width="0.2" textLength="54.6" lengthAdjust="spacingAndGlyphs">10 Feb 18:35</text>
<text x="396.7" y="566" font-size="10.0" fill="#ffffff" stroke="#ffffff" stroke-width="0.2" textLength="54.6" lengthAdjust="spacingAndGlyphs">10 Feb 19:15</text>
<text x="460.7" y="566" font-size="10.0" fill="#ffffff" stroke="#ffffff" stroke-width="0.2" textLength="54.6" lengthAdjust="spacingAndGlyphs">10 Feb 19:55</text>
<text x="524.7" y="566" font-size="10.0" fill="#ffffff" stroke="#ffffff" stroke-width="0.2" textLength="54.6" lengthAdjust="spacingAndGlyphs">10 Feb 20:35</text>
<text x="588.7" y="566" font-size="10.0" fill="#ffffff" stroke="#ffffff" stroke-width="0.2" textLength="54.6" lengthAdjust="spacingAndGlyphs">10 Feb 21:15</text>
<text x="652.7" y="566" font-size="10.0" fill="#ffffff" stroke="#ffffff" stroke-width="0.2" textLength="54.6" lengthAdjust="spacingAndGlyphs">10 Feb 21:55</text>
</g>
</svg>
</body></html>
